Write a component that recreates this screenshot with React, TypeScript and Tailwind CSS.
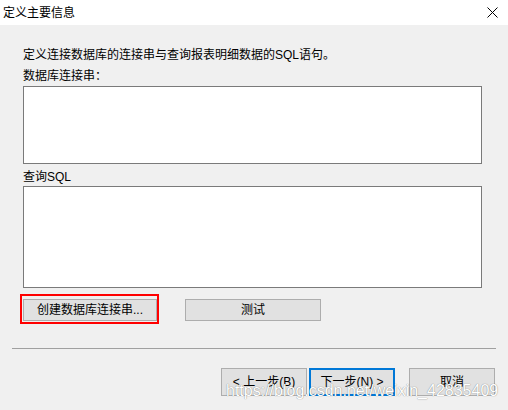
const font = { fontFamily: '"Liberation Sans", "Noto Sans CJK SC", sans-serif' };

export default function App() {
  return (
    <div
      className="relative w-[508px] h-[410px] bg-[#f0f0f0] text-[12px] text-black overflow-hidden"
      style={font}
    >
      {/* Title bar */}
      <div className="h-[25px] bg-white flex items-center justify-between pl-[3px] pr-[10px]">
        <span className="leading-[16px]">定义主要信息</span>
        <svg width="11" height="11" viewBox="0 0 11 11">
          <path d="M0.5 0.5 L10.5 10.5 M10.5 0.5 L0.5 10.5" stroke="#000" strokeWidth="1" />
        </svg>
      </div>

      {/* Body */}
      <div className="px-[23px] pt-[22px]">
        <div className="leading-[16px]">定义连接数据库的连接串与查询报表明细数据的SQL语句。</div>
        <div className="leading-[16px] mt-[5px]">数据库连接串：</div>
        <div className="mt-[2px] h-[78px] w-[459px] bg-white border border-[#7a7a7a]" />
        <div className="leading-[16px] mt-[5px]">查询SQL</div>
        <div className="mt-[1px] h-[102px] w-[459px] bg-white border border-[#7a7a7a]" />

        <div className="mt-[11px] flex gap-[28px] items-center">
          <div className="relative">
            <button className="w-[134px] h-[22px] bg-[#e1e1e1] border border-[#adadad] leading-[16px]">
              创建数据库连接串...
            </button>
            <div className="absolute left-[-3px] top-[-5px] w-[139px] h-[30px] border-2 border-[#ff0000] pointer-events-none" />
          </div>
          <button className="w-[136px] h-[22px] bg-[#e1e1e1] border border-[#adadad] leading-[16px]">
            测试
          </button>
        </div>
      </div>

      {/* Separator */}
      <div className="mt-[27px] mx-[12px] h-px bg-[#a0a0a0]" />

      {/* Footer buttons */}
      <div className="mt-[19px] flex pl-[221px]">
        <button className="w-[86px] h-[28px] bg-[#e1e1e1] border border-[#adadad] leading-[16px]">
          &lt; 上一步(B)
        </button>
        <button className="ml-[2px] w-[86px] h-[28px] bg-[#e1e1e1] border-2 border-[#0078d7] leading-[16px]">
          下一步(N) &gt;
        </button>
        <button className="ml-[14px] w-[86px] h-[28px] bg-[#e1e1e1] border border-[#adadad] leading-[16px]">
          取消
        </button>
      </div>

      {/* Watermark */}
      <div
        className="absolute left-[226px] top-[381px] text-[16px] leading-[20px] text-white whitespace-nowrap pointer-events-none"
        style={{
          fontFamily: '"Liberation Sans", sans-serif',
          textShadow: "0 0 1px rgba(0,0,0,0.35), 0 0 1px rgba(0,0,0,0.25)",
        }}
      >
        https://blog.csdn.net/weixin_42835409
      </div>
    </div>
  );
}
